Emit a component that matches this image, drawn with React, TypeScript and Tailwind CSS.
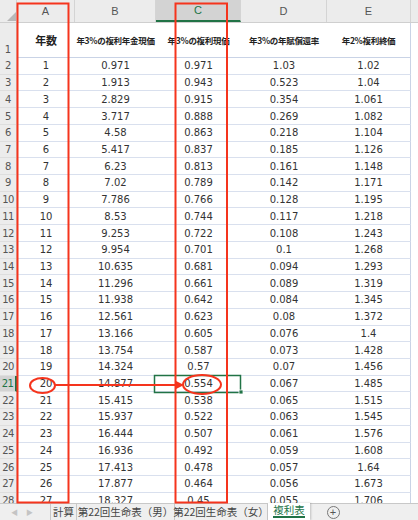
import React from 'react';

const ROWS: [string, string, string, string, string][] = [
  ['1', '0.971', '0.971', '1.03', '1.02'],
  ['2', '1.913', '0.943', '0.523', '1.04'],
  ['3', '2.829', '0.915', '0.354', '1.061'],
  ['4', '3.717', '0.888', '0.269', '1.082'],
  ['5', '4.58', '0.863', '0.218', '1.104'],
  ['6', '5.417', '0.837', '0.185', '1.126'],
  ['7', '6.23', '0.813', '0.161', '1.148'],
  ['8', '7.02', '0.789', '0.142', '1.171'],
  ['9', '7.786', '0.766', '0.128', '1.195'],
  ['10', '8.53', '0.744', '0.117', '1.218'],
  ['11', '9.253', '0.722', '0.108', '1.243'],
  ['12', '9.954', '0.701', '0.1', '1.268'],
  ['13', '10.635', '0.681', '0.094', '1.293'],
  ['14', '11.296', '0.661', '0.089', '1.319'],
  ['15', '11.938', '0.642', '0.084', '1.345'],
  ['16', '12.561', '0.623', '0.08', '1.372'],
  ['17', '13.166', '0.605', '0.076', '1.4'],
  ['18', '13.754', '0.587', '0.073', '1.428'],
  ['19', '14.324', '0.57', '0.07', '1.456'],
  ['20', '14.877', '0.554', '0.067', '1.485'],
  ['21', '15.415', '0.538', '0.065', '1.515'],
  ['22', '15.937', '0.522', '0.063', '1.545'],
  ['23', '16.444', '0.507', '0.061', '1.576'],
  ['24', '16.936', '0.492', '0.059', '1.608'],
  ['25', '17.413', '0.478', '0.057', '1.64'],
  ['26', '17.877', '0.464', '0.056', '1.673'],
  ['27', '18.327', '0.45', '0.055', '1.706'],
];

const COLS = ['w-[58px]', 'w-[81px]', 'w-[85px]', 'w-[86px]', 'w-[84px]'];
const HEADS = ['年数', '年3%の複利年金現価', '年3%の複利現価', '年3%の年賦償還率', '年2%複利終価'];

const App = () => {
  return (
    <div className="relative w-[418px] h-[520px] overflow-hidden bg-white flex flex-col font-['DejaVu_Sans','Noto_Sans_CJK_JP',sans-serif]">
      {/* grid */}
      <div className="flex-1 overflow-hidden">
        {/* column letters */}
        <div className="flex h-[23px] bg-[#ececec] border-b border-[#cfcfcf] font-['Liberation_Sans',sans-serif] text-[11px] text-[#555]">
          <div className="w-[17px] relative border-r border-[#d4d4d4]">
            <div className="absolute left-[7px] top-[12px] w-0 h-0 border-l-[9px] border-l-transparent border-b-[9px] border-b-[#b8b8b8]" />
          </div>
          {['A', 'B', 'C', 'D', 'E'].map((c, i) => (
            <div
              key={c}
              className={`${COLS[i]} flex items-center justify-center border-r border-[#d4d4d4] ${
                c === 'C' ? 'bg-[#d3d3d3] text-[#217346] border-b-2 border-b-[#217346]' : ''
              }`}
            >
              {c}
            </div>
          ))}
          <div className="flex-1" />
        </div>

        {/* row 1: titles */}
        <div className="flex h-[35px]">
          <div className="w-[17px] bg-[#ececec] border-r border-[#d4d4d4] flex items-end justify-center pb-[1px] text-[10px] text-[#555]">1</div>
          {HEADS.map((h, i) => (
            <div
              key={i}
              className={`${COLS[i]} flex items-center justify-center font-bold text-[#222] whitespace-nowrap tracking-[-0.3px] font-['Noto_Sans_CJK_JP',sans-serif] ${
                i === 0 ? 'text-[11px]' : 'text-[8.5px]'
              } ${i === 4 ? 'border-r border-[#c9d3e6]' : ''} border-b border-[#c9d3e6]`}
            >
              {h}
            </div>
          ))}
        </div>

        {/* data rows */}
        {ROWS.map((r, ri) => {
          const n = ri + 2;
          const sel = n === 21;
          return (
            <div key={n} className="flex h-[16.72px]">
              <div
                className={`w-[17px] flex items-center justify-center text-[10px] border-r tracking-[-0.5px] ${
                  sel ? 'bg-[#d3d3d3] text-[#217346] border-r-2 border-[#217346]' : 'bg-[#ececec] text-[#555] border-[#d4d4d4]'
                } border-b border-b-[#dedede]`}
              >
                {n}
              </div>
              {r.map((v, ci) => (
                <div
                  key={ci}
                  className={`${COLS[ci]} flex items-center justify-center text-[10px] text-[#333] border-b border-[#d9e0ee] ${
                    ci === 4 ? 'border-r border-r-[#c9d3e6]' : ''
                  }`}
                >
                  {v}
                </div>
              ))}
            </div>
          );
        })}
      </div>

      {/* sheet tabs */}
      <div className="h-[17px] shrink-0 flex items-stretch bg-[#efefef] border-t border-[#c8c8c8] text-[10.5px] text-[#444] whitespace-nowrap font-['Noto_Sans_CJK_JP',sans-serif]">
        <div className="w-[50px] shrink-0 flex items-center gap-[8px] pl-[11px] text-[7px] text-[#c4c4c4]">
          <span>◀</span>
          <span>▶</span>
        </div>
        <div className="w-[27px] shrink-0 flex items-center justify-center border-l border-r border-[#c8c8c8] leading-none">計算</div>
        <div className="w-[98px] shrink-0 flex items-center justify-center border-r border-[#c8c8c8] leading-none">第22回生命表（男）</div>
        <div className="w-[93px] shrink-0 flex items-center justify-center border-r border-[#c8c8c8] leading-none">第22回生命表（女）</div>
        <div className="w-[42px] shrink-0 -mt-[1px] flex items-center justify-center bg-white text-[#217346] leading-none shadow-[1px_0_2px_rgba(0,0,0,0.2)]">
          <span className="border-b-2 border-[#217346] pb-[1px]">複利表</span>
        </div>
        <div className="w-[46px] shrink-0 flex items-center justify-center">
          <div className="w-[13px] h-[13px] rounded-full border border-[#777] flex items-center justify-center text-[11px] text-[#555] leading-none font-['Liberation_Sans',sans-serif]">+</div>
        </div>
      </div>

      {/* annotations */}
      <svg className="absolute left-0 top-0 pointer-events-none" width="418" height="520">
        <rect x="154.5" y="375.5" width="86" height="17" fill="none" stroke="#217346" strokeWidth="1.5" />
        <rect x="239" y="390" width="4" height="4" fill="#217346" stroke="#fff" strokeWidth="0.8" />
        <rect x="17.5" y="3.5" width="51" height="499" fill="none" stroke="#f5341d" strokeWidth="2" />
        <rect x="175.5" y="3.5" width="51.5" height="499" fill="none" stroke="#f5341d" strokeWidth="2" />
        <ellipse cx="42.5" cy="385.5" rx="12.5" ry="7.5" fill="none" stroke="#f5341d" strokeWidth="2" />
        <ellipse cx="202" cy="384.5" rx="19" ry="9.5" fill="none" stroke="#f5341d" strokeWidth="2" />
        <line x1="55" y1="385" x2="178" y2="385" stroke="#f5341d" strokeWidth="2" />
        <polygon points="176,381 184,385 176,389" fill="#f5341d" />
      </svg>
    </div>
  );
};

export default App;
